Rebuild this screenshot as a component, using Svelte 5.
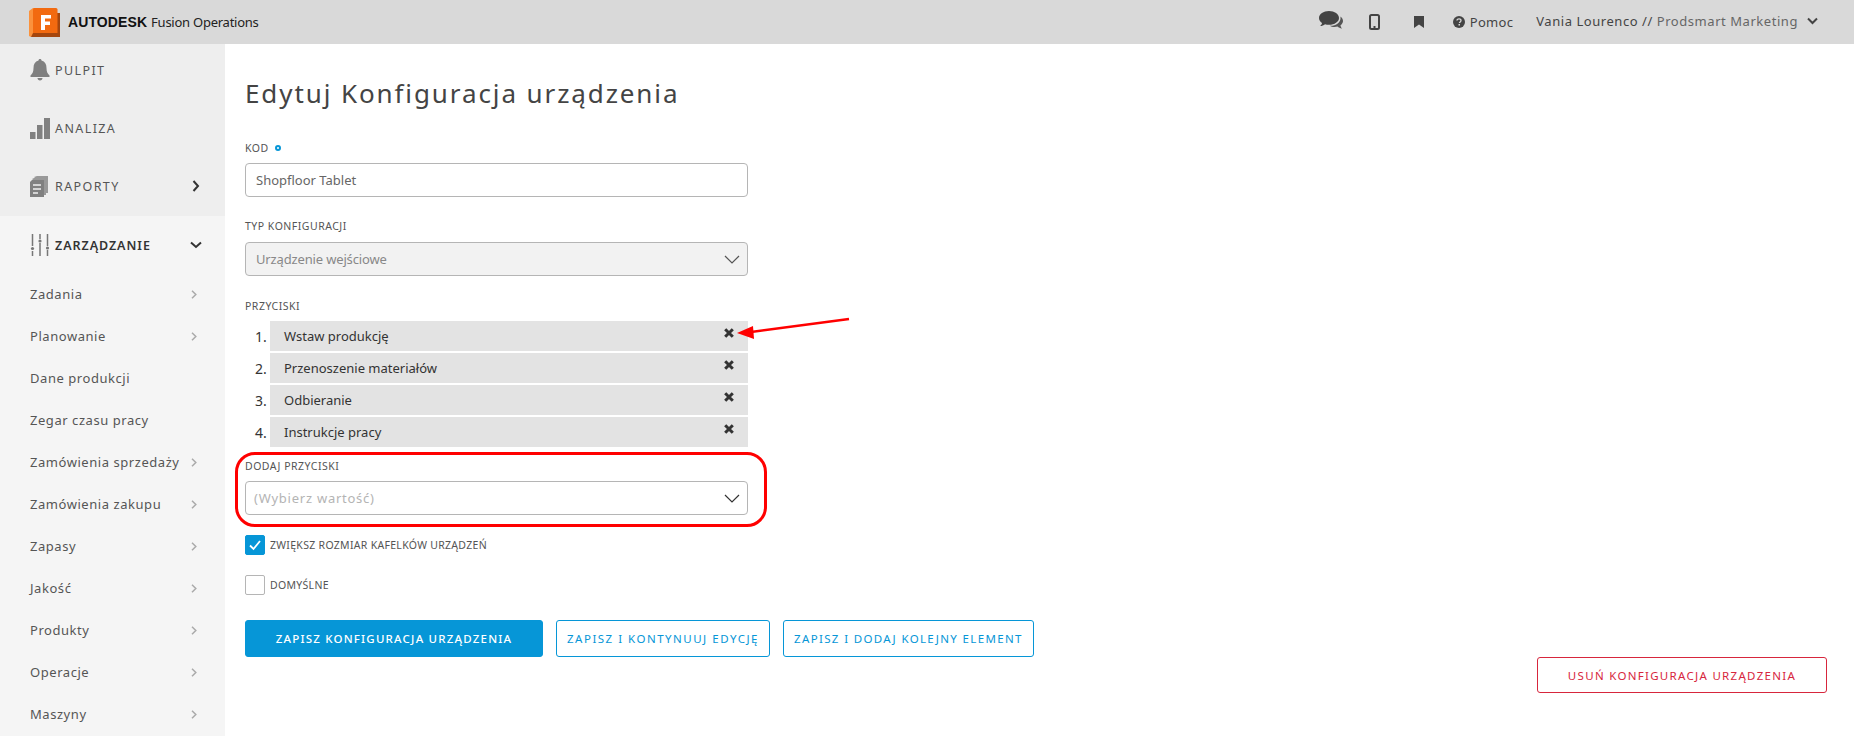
<script>
  const sub = [
    ['Zadania', true], ['Planowanie', true], ['Dane produkcji', false], ['Zegar czasu pracy', false],
    ['Zamówienia sprzedaży', true], ['Zamówienia zakupu', true], ['Zapasy', true], ['Jakość', true],
    ['Produkty', true], ['Operacje', true], ['Maszyny', true]
  ];
  const buttons = ['Wstaw produkcję', 'Przenoszenie materiałów', 'Odbieranie', 'Instrukcje pracy'];
</script>

<div class="page">
  <header class="top">
    <div class="brand">
      <svg class="logo" width="32" height="29" viewBox="0 0 32 29">
        <path d="M0 3 L4 0 H8 V25 L2 29 L0 28Z" fill="#fb923c"/>
        <path d="M4 25 L2 29 H31 V5 H28 V25Z" fill="#a5470f"/>
        <path d="M4 1.500 Q4 0 5.500 0 H27 Q28.500 0 28.500 1.500 V25 H4Z" fill="#f26a10"/>
        <path d="M12 7 H22 V10.500 H16 V13.500 H21 V17 H16 V22 H12Z" fill="#fff"/>
      </svg>
      <b class="ad">AUTODESK</b><span class="fo">Fusion Operations</span>
    </div>
    <div class="tools">
      <svg class="t1" width="24" height="20" viewBox="0 0 24 20"><path d="M10 0C4.500 0 0 3 0 7c0 2 1.200 3.700 3 5-.2 1.200-1 2.300-2 3 2 0 3.800-.7 5-1.800 1.200.4 2.600.6 4 .6 5.500 0 10-3 10-6.800S15.500 0 10 0z" fill="#444"/><path d="M21.500 5.500C23 6.800 24 8.300 24 10c0 1.700-1 3.200-2.500 4.300.1 1.300.8 2.500 1.500 3.400-1.800-.3-3.400-1.200-4.500-2.200-1 .3-2 .5-3 .5-1.800 0-3.500-.4-4.800-1.200 5.500.5 11.500-3 10.800-8.800z" fill="#555"/></svg>
      <svg class="t2" width="11" height="16" viewBox="0 0 11 16"><rect x="1" y="1" width="9" height="14" rx="1.500" fill="none" stroke="#444" stroke-width="2"/><rect x="4.500" y="12" width="2" height="2" fill="#444"/></svg>
      <svg class="t3" width="10" height="12" viewBox="0 0 10 12"><path d="M0 0H10V12L5 8.500 0 12Z" fill="#444"/></svg>
      <span class="help"><svg width="12" height="12" viewBox="0 0 12 12"><circle cx="6" cy="6" r="6" fill="#444"/><path d="M4 4.600C4 3.400 5 2.800 6 2.800s2 .6 2 1.700c0 1.400-1.500 1.400-1.500 2.500" fill="none" stroke="#d9d9d9" stroke-width="1.300"/><rect x="5.500" y="8" width="1.500" height="1.500" fill="#d9d9d9"/></svg>Pomoc</span>
      <span class="user"><span class="un">Vania Lourenco //</span> <span class="co">Prodsmart Marketing</span></span>
      <svg class="uc" width="11" height="8" viewBox="0 0 11 8"><path d="M1 1.500 5.500 6 10 1.500" fill="none" stroke="#444" stroke-width="2"/></svg>
    </div>
  </header>

  <div class="body">
    <aside class="side">
      <div class="mains">
        <div class="m">
          <svg class="mi" width="20" height="22" viewBox="0 0 20 22"><path d="M10 0c1 0 1.500.7 1.500 1.500C15 2.500 16.500 5 16.500 9c0 4 1 5.500 3 7.500V18H.5v-1.500c2-2 3-3.500 3-7.500 0-4 1.500-6.500 5-7.500C8.500.7 9 0 10 0zM7.500 19h5c0 1.500-1 2.500-2.500 2.500S7.500 20.500 7.500 19z" fill="#808080"/></svg>
          <span>PULPIT</span>
        </div>
        <div class="m">
          <svg class="mi" width="20" height="21" viewBox="0 0 20 21"><rect y="14" width="5.500" height="7" fill="#808080"/><rect x="7" y="7" width="5.500" height="14" fill="#808080"/><rect x="14" y="0" width="6" height="21" fill="#808080"/></svg>
          <span>ANALIZA</span>
        </div>
        <div class="m">
          <svg class="mi" width="20" height="21" viewBox="0 0 20 21"><path d="M4 1 7 0H18V17H16V2H5Z" fill="#999"/><path d="M2 3 4 2H16V19H14V4H3Z" fill="#999"/><path d="M0 6 2 4H14V21H0Z" fill="#808080"/><path d="M3 9H11M3 13H11M3 17H8" stroke="#eee" stroke-width="1.500"/></svg>
          <span>RAPORTY</span>
          <svg class="ch" width="8" height="12" viewBox="0 0 8 12"><path d="M1.500 1 6 6 1.500 11" fill="none" stroke="#333" stroke-width="2"/></svg>
        </div>
      </div>
      <div class="active">
        <div class="m on">
          <svg class="mi" width="20" height="22" viewBox="0 0 20 22"><path d="M2.500 0V12M2.500 17V22M10 0V5M10 9V22M17.500 0V12M17.500 16V22" stroke="#777" stroke-width="1.500" fill="none"/><circle cx="2.500" cy="14.500" r="1.600" fill="#777"/><circle cx="10" cy="7" r="1.600" fill="#777"/><circle cx="17.500" cy="14" r="1.600" fill="#777"/></svg>
          <span>ZARZĄDZANIE</span>
          <svg class="ch dn" width="12" height="8" viewBox="0 0 12 8"><path d="M1 1.500 6 6 11 1.500" fill="none" stroke="#333" stroke-width="2"/></svg>
        </div>
        <ul class="subs">
          {#each sub as [name, more]}
            <li>
              <span>{name}</span>
              {#if more}<svg width="6" height="9" viewBox="0 0 6 9"><path d="M1 .8 4.800 4.500 1 8.200" fill="none" stroke="#aaa" stroke-width="1.500"/></svg>{/if}
            </li>
          {/each}
        </ul>
      </div>
    </aside>

    <main class="main">
      <h1>Edytuj Konfiguracja urządzenia</h1>

      <div class="form">
        <label class="lab k">KOD <i class="req"></i></label>
        <div class="field">Shopfloor Tablet</div>

        <label class="lab t">TYP KONFIGURACJI</label>
        <div class="field dis">Urządzenie wejściowe
          <svg class="sel" width="16" height="9" viewBox="0 0 16 9"><path d="M1 1 8 8 15 1" fill="none" stroke="#555" stroke-width="1.200"/></svg>
        </div>

        <label class="lab p">PRZYCISKI</label>
        <ol class="rows">
          {#each buttons as b, i}
            <li>
              <span class="n">{i + 1}.</span>
              <div class="row"><span>{b}</span>
                <svg width="10" height="10" viewBox="0 0 10 10"><path d="M1.200 1.200 8.800 8.800M8.800 1.200 1.200 8.800" stroke="#333" stroke-width="3"/></svg>
              </div>
            </li>
          {/each}
        </ol>

        <label class="lab d">DODAJ PRZYCISKI</label>
        <div class="field ph">(Wybierz wartość)
          <svg class="sel" width="16" height="9" viewBox="0 0 16 9"><path d="M1 1 8 8 15 1" fill="none" stroke="#333" stroke-width="1.200"/></svg>
        </div>

        <div class="check c1">
          <span class="box on"><svg width="14" height="12" viewBox="0 0 14 12"><path d="M2 6.500 5.500 10 12 2" fill="none" stroke="#fff" stroke-width="1.800"/></svg></span>
          <span>ZWIĘKSZ ROZMIAR KAFELKÓW URZĄDZEŃ</span>
        </div>
        <div class="check c2">
          <span class="box"></span>
          <span>DOMYŚLNE</span>
        </div>
      </div>

      <div class="actions">
        <button class="btn pri">ZAPISZ KONFIGURACJA URZĄDZENIA</button>
        <button class="btn out one">ZAPISZ I KONTYNUUJ EDYCJĘ</button>
        <button class="btn out two">ZAPISZ I DODAJ KOLEJNY ELEMENT</button>
      </div>
      <div class="danger"><button class="btn del">USUŃ KONFIGURACJA URZĄDZENIA</button></div>

      <div class="ring"></div>
      <svg class="arrow" width="120" height="24" viewBox="0 0 120 24">
        <path d="M112 2 L14 15" stroke="#f00" stroke-width="2.500"/>
        <path d="M0 16 L16 9 L17 22Z" fill="#f00"/>
      </svg>
    </main>
  </div>
</div>

<style>
  :global(body) { margin: 0; overflow: hidden; background: #fff; }
  .page { width: 1854px; height: 736px; overflow: hidden; font-family: "Noto Sans", "Open Sans", sans-serif; color: #444; display: flex; flex-direction: column; }
  .top { height: 44px; flex: none; background: #d9d9d9; display: flex; justify-content: space-between; align-items: center; }
  .brand { display: flex; align-items: center; padding-left: 29px; }
  .logo { margin-right: 7px; margin-top: 1px; }
  .ad { font-family: "Liberation Sans", sans-serif; font-weight: 700; font-size: 14px; color: #111; letter-spacing: 0.100px; margin-right: 4px; }
  .fo { font-size: 13px; color: #222; font-family: "Noto Sans", sans-serif; letter-spacing: -0.250px; }
  .tools { display: flex; align-items: center; padding-right: 36px; }
  .t1 { margin-right: 26px; margin-top: -2px; }
  .t2 { margin-right: 34px; }
  .t3 { margin-right: 29px; }
  .help { display: flex; align-items: center; gap: 5px; font-size: 13px; letter-spacing: 0.300px; margin-right: 23px; color: #444; }
  .user { font-size: 13px; letter-spacing: 0.550px; margin-right: 9px; margin-top: -2px; white-space: pre; }
  .un { color: #444; }
  .co { color: #666; }
  .uc { margin-top: -2px; }

  .body { flex: 1; display: flex; min-height: 0; }
  .side { width: 225px; flex: none; background: #f5f5f5; overflow: hidden; }
  .mains { background: #eee; height: 172px; }
  .m { height: 58px; display: flex; align-items: center; padding-left: 30px; font-size: 12.500px; letter-spacing: 1.400px; color: #555; position: relative; }
  .mains .m:first-child { height: 52px; margin-bottom: 3px; }
  .mi { margin-right: 5px; flex: none; }
  .ch { position: absolute; left: 192px; }
  .ch.dn { left: 190px; }
  .on { font-weight: 600; color: #333; letter-spacing: 0.950px; }
  .subs { list-style: none; margin: -1px 0 0; padding: 0; }
  .subs li { height: 42px; display: flex; align-items: center; padding-left: 30px; font-size: 13px; letter-spacing: 0.550px; color: #555; position: relative; }
  .subs svg { position: absolute; left: 191px; }

  .main { flex: 1; position: relative; padding: 29px 20px 0; }
  h1 { margin: 0; font-weight: 400; font-size: 26px; letter-spacing: 1.900px; line-height: 40px; color: #444; }
  .form { width: 503px; margin-top: 28px; }
  .lab { display: block; font-size: 10.500px; line-height: 14px; color: #555; letter-spacing: 0.500px; }
  .lab.k { margin-top: 0; margin-bottom: 8px; }
  .lab.t { margin-top: 22px; margin-bottom: 9px; }
  .lab.p { margin-top: 23px; margin-bottom: 8px; }
  .lab.d { margin-top: 12px; margin-bottom: 8px; }
  .req { display: inline-block; width: 6px; height: 6px; box-sizing: border-box; border: 2px solid #0696d7; border-radius: 50%; margin-left: 3px; vertical-align: 1px; }
  .field { box-sizing: border-box; height: 34px; border: 1px solid #b5b5b5; border-radius: 4px; display: flex; align-items: center; padding-left: 10px; font-size: 13px; letter-spacing: 0; color: #666; position: relative; background: #fff; }
  .dis { background: #f2f2f2; color: #888; letter-spacing: -0.150px; }
  .ph { color: #b4b4b4; padding-left: 8px; letter-spacing: 0.750px; }
  .sel { position: absolute; right: 7px; top: 12px; }
  .rows { list-style: none; margin: 0; padding: 0; display: flex; flex-direction: column; gap: 2px; }
  .rows li { display: flex; align-items: center; height: 30px; }
  .n { width: 25px; box-sizing: border-box; padding-left: 10px; font-size: 14px; color: #333; }
  .row { flex: 1; height: 30px; box-sizing: border-box; background: #e3e3e3; display: flex; align-items: center; justify-content: space-between; padding: 0 14px; font-size: 13px; color: #333; }
  .row svg { position: relative; top: -3px; }
  .check { display: flex; align-items: center; gap: 5px; font-size: 10.500px; letter-spacing: 0.300px; color: #555; }
  .c1 { margin-top: 20px; }
  .c2 { margin-top: 20px; }
  .box { width: 20px; height: 20px; box-sizing: border-box; border: 1px solid #b5b5b5; border-radius: 2px; display: flex; align-items: center; justify-content: center; background: #fff; }
  .box.on { background: #0696d7; border-color: #0696d7; }
  .actions { display: flex; gap: 13px; margin-top: 25px; }
  .btn { font-family: inherit; font-size: 11.500px; letter-spacing: 1.200px; height: 37px; border-radius: 3px; border: 1px solid #0696d7; background: #fff; color: #0696d7; padding: 0; cursor: pointer; white-space: nowrap; }
  .pri { width: 298px; background: #0696d7; color: #fff; font-weight: 500; }
  .out { padding: 0 10px; }
  .one { letter-spacing: 1.500px; }
  .two { letter-spacing: 1.350px; }
  .danger { display: flex; justify-content: flex-end; padding-right: 7px; }
  .del { width: 290px; height: 36px; border-color: #d7263d; color: #d7263d; letter-spacing: 1.300px; }
  .ring { position: absolute; left: 10px; top: 408px; width: 526px; height: 69px; border: 3px solid #f00; border-radius: 20px; pointer-events: none; }
  .arrow { position: absolute; left: 512px; top: 273px; }
</style>
